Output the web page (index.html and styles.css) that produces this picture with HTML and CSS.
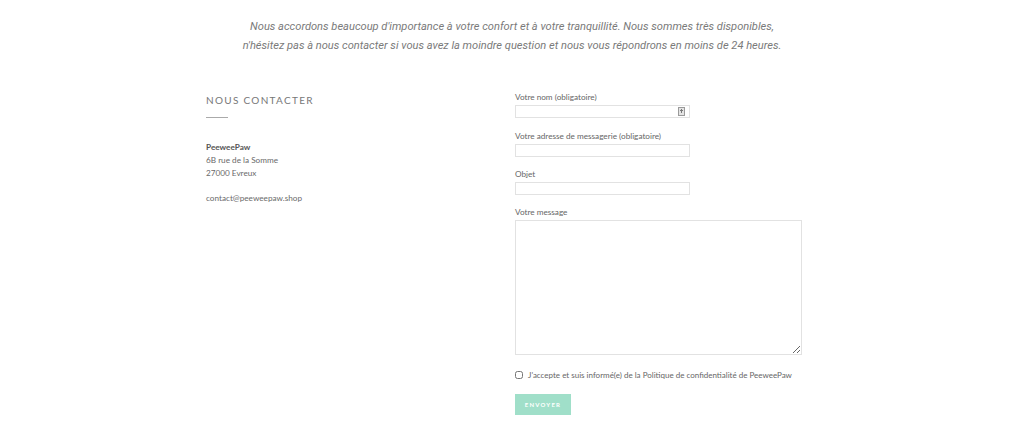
FILE: index.html
```html
<!DOCTYPE html>
<html lang="fr">
<head>
    <meta charset="UTF-8">
    <meta name="viewport" content="width=device-width, initial-scale=1.0">
    <title>Contact - PeeweePaw</title>
    <link rel="stylesheet" href="styles.css">
</head>
<body>
    <section class="intro">
        <p>Nous accordons beaucoup d'importance à votre confort et à votre tranquillité. Nous sommes très disponibles,<br>
        n'hésitez pas à nous contacter si vous avez la moindre question et nous vous répondrons en moins de 24 heures.</p>
    </section>

    <main class="contact">
        <div class="contact-info">
            <h2>Nous contacter</h2>
            <span class="sep"></span>
            <p class="address">
                <strong>PeeweePaw</strong><br>
                6B rue de la Somme<br>
                27000 Evreux
            </p>
            <p class="mail">contact@peeweepaw.shop</p>
        </div>

        <form class="contact-form">
            <label class="field">
                <span>Votre nom (obligatoire)</span>
                <span class="input-wrap">
                    <input type="text" class="short">
                    <svg class="pw-icon" width="7" height="9" viewBox="0 0 7 9">
                        <rect x="0.5" y="0.5" width="6" height="8" fill="#e4e4e4" stroke="#9a9a9a"/>
                        <rect x="3" y="2" width="1" height="4" fill="#777"/>
                        <rect x="2" y="3" width="3" height="1" fill="#777"/>
                    </svg>
                </span>
            </label>
            <label class="field">
                <span>Votre adresse de messagerie (obligatoire)</span>
                <input type="email" class="short">
            </label>
            <label class="field">
                <span>Objet</span>
                <input type="text" class="short">
            </label>
            <label class="field">
                <span>Votre message</span>
                <textarea></textarea>
            </label>
            <label class="accept">
                <input type="checkbox">
                <span>J'accepte et suis informé(e) de la Politique de confidentialité de PeeweePaw</span>
            </label>
            <button type="button" class="send">Envoyer</button>
        </form>
    </main>
</body>
</html>
```

FILE: styles.css
```css
* {
    margin: 0;
    padding: 0;
    box-sizing: border-box;
}

body {
    background-color: #fff;
    color: #666;
    font-family: Lato, Arial, sans-serif;
    font-size: 8.2px;
}

.intro {
    padding-top: 17px;
    text-align: center;
}

.intro p {
    font-family: Roboto, Arial, sans-serif;
    font-style: italic;
    font-size: 11.1px;
    line-height: 19px;
    color: #7a7a7a;
}

.contact {
    display: grid;
    grid-template-columns: 309px 1fr;
    width: 612px;
    margin: 0 auto;
    padding-top: 35px;
}

.contact-info {
    padding-top: 3px;
}

.contact-info h2 {
    font-family: Lato, Arial, sans-serif;
    font-weight: normal;
    font-size: 10px;
    letter-spacing: 1.3px;
    text-transform: uppercase;
    color: #777;
    line-height: 14px;
}

.sep {
    display: block;
    width: 22px;
    height: 1px;
    background-color: #aaa;
    margin: 10px 0 23px;
}

.address,
.mail {
    line-height: 13px;
    color: #6a6a6a;
}

.address strong {
    color: #555;
}

.mail {
    margin-top: 12px;
}

.contact-form {
    display: flex;
    flex-direction: column;
    padding-top: 2px;
}

.field {
    display: flex;
    flex-direction: column;
    gap: 2px;
    margin-bottom: 12px;
    font-size: 8.2px;
    line-height: 11px;
    color: #666;
}

.input-wrap {
    position: relative;
    width: 175px;
}

.pw-icon {
    position: absolute;
    right: 5px;
    top: 2px;
}

input.short {
    width: 175px;
    height: 13px;
    border: 1px solid #e2e2e2;
    background: #fff;
}

textarea {
    width: 287px;
    height: 135px;
    border: 1px solid #e2e2e2;
    resize: vertical;
}

.accept {
    display: flex;
    align-items: center;
    gap: 5px;
    margin-top: 3px;
    font-size: 8px;
    color: #666;
}

.accept input {
    width: 8px;
    height: 8px;
    margin: 0;
}

.send {
    align-self: flex-start;
    margin-top: 14px;
    width: 56px;
    height: 21px;
    border: none;
    background-color: #a0dfc9;
    color: #fff;
    font-family: Lato, Arial, sans-serif;
    font-size: 6px;
    font-weight: bold;
    letter-spacing: 1.2px;
    text-transform: uppercase;
}
```
